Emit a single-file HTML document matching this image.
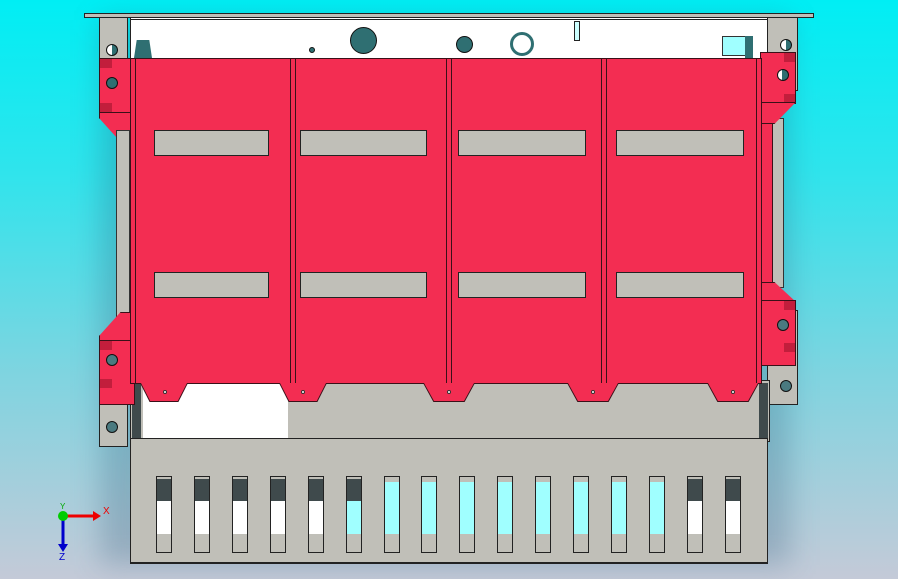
<!DOCTYPE html>
<html><head><style>
body{margin:0;width:898px;height:579px;overflow:hidden;position:relative;background:linear-gradient(180deg,#00eef4 0%,#30e4ec 30%,#80d4e0 65%,#c4cad8 100%);font-family:"Liberation Sans",sans-serif}
div{position:absolute;box-sizing:border-box}
.g{background:#c0bfb8;border:1px solid #222}
.r{background:#f32d52;border:1px solid #3a1018}
.dr{background:#c21e3c}
.w{background:#fff}
.c{border-radius:50%;background:#2f6f72;border:1px solid #111}
.slot{width:16px;top:476px;height:77px;border:1px solid #222;background:#c0bfb8}
.slot i{position:absolute;left:0;right:0;display:block}
</style></head><body>
<div style="left:100px;top:20px;width:690px;height:545px;background:rgba(40,80,110,.25);filter:blur(14px)"></div>
<!-- top flange -->
<div class="g" style="left:84px;top:13px;width:730px;height:5px"></div>
<div class="w" style="left:130px;top:17px;width:638px;height:42px;border:1px solid #222"></div>
<div style="left:130px;top:19px;width:638px;height:1px;background:#222"></div>
<div class="c" style="left:350px;top:27px;width:27px;height:27px"></div>
<div class="c" style="left:456px;top:36px;width:17px;height:17px"></div>
<div class="c" style="left:510px;top:32px;width:24px;height:24px;background:#fff;border:3px solid #2f6f72"></div>
<div class="c" style="left:309px;top:47px;width:6px;height:6px"></div>
<div style="left:574px;top:21px;width:6px;height:20px;border:1px solid #222;background:#cff"></div>
<div style="left:134px;top:40px;width:18px;height:18px;background:#2f6f72;clip-path:polygon(15% 0,85% 0,100% 100%,0 100%)"></div>
<div style="left:722px;top:36px;width:30px;height:20px;background:#a0ffff;border:1px solid #333"></div>
<div style="left:745px;top:36px;width:8px;height:22px;background:#2f6f72"></div>
<!-- uprights -->
<div class="g" style="left:99px;top:17px;width:29px;height:44px"></div>
<div class="c" style="left:106px;top:44px;width:12px;height:12px;background:linear-gradient(90deg,#fff 50%,#2f6f72 50%)"></div>
<div class="g" style="left:767px;top:17px;width:31px;height:74px"></div>
<div class="c" style="left:780px;top:39px;width:12px;height:12px;background:linear-gradient(90deg,#fff 50%,#2f6f72 50%)"></div>
<div class="g" style="left:99px;top:395px;width:29px;height:52px"></div>
<div class="c" style="left:106px;top:421px;width:12px;height:12px;background:#4a7a80"></div>
<div class="g" style="left:767px;top:310px;width:31px;height:95px"></div>
<div class="c" style="left:780px;top:380px;width:12px;height:12px;background:#4a7a80"></div>
<!-- grey band -->
<div class="g" style="left:130px;top:380px;width:640px;height:62px"></div>
<div class="w" style="left:143px;top:383px;width:145px;height:56px"></div>
<div style="left:132px;top:383px;width:9px;height:56px;background:#3f4a4c"></div>
<div style="left:759px;top:383px;width:9px;height:56px;background:#3f4a4c"></div>
<!-- left bracket -->
<div class="r" style="left:99px;top:58px;width:36px;height:55px"></div>
<div class="dr" style="left:100px;top:59px;width:12px;height:9px"></div>
<div class="dr" style="left:100px;top:103px;width:12px;height:9px"></div>
<div class="c" style="left:106px;top:77px;width:12px;height:12px"></div>
<div class="r" style="left:99px;top:112px;width:36px;height:30px;clip-path:polygon(0 0,100% 0,100% 100%,60% 100%,0 20%)"></div>
<div style="left:116px;top:130px;width:14px;height:200px;background:#c0bfb8;border:1px solid #333"></div>
<div class="r" style="left:99px;top:312px;width:36px;height:30px;clip-path:polygon(60% 0,100% 0,100% 100%,0 100%,0 80%)"></div>
<div class="r" style="left:99px;top:340px;width:36px;height:65px"></div>
<div class="dr" style="left:100px;top:341px;width:12px;height:9px"></div>
<div class="dr" style="left:100px;top:379px;width:12px;height:9px"></div>
<div class="c" style="left:106px;top:354px;width:12px;height:12px;background:#4a7a80"></div>
<!-- right bracket -->
<div style="left:770px;top:118px;width:14px;height:170px;background:#c0bfb8;border:1px solid #333"></div>
<div class="r" style="left:760px;top:110px;width:13px;height:225px"></div>
<div class="r" style="left:760px;top:52px;width:36px;height:52px"></div>
<div class="dr" style="left:784px;top:53px;width:11px;height:9px"></div>
<div class="dr" style="left:784px;top:94px;width:11px;height:9px"></div>
<div class="c" style="left:777px;top:69px;width:12px;height:12px;background:linear-gradient(90deg,#fff 40%,#2f6f72 40%)"></div>
<div class="r" style="left:760px;top:102px;width:36px;height:22px;clip-path:polygon(0 0,100% 0,40% 100%,0 100%)"></div>
<div class="r" style="left:760px;top:282px;width:36px;height:20px;clip-path:polygon(0 0,40% 0,100% 100%,0 100%)"></div>
<div class="r" style="left:760px;top:300px;width:36px;height:66px"></div>
<div class="dr" style="left:784px;top:301px;width:11px;height:9px"></div>
<div class="dr" style="left:784px;top:343px;width:11px;height:9px"></div>
<div class="c" style="left:777px;top:319px;width:12px;height:12px;background:#4a7a80"></div>
<!-- main red -->
<div class="r" style="left:130px;top:58px;width:632px;height:326px"></div>
<div style="left:135px;top:58px;width:1px;height:326px;background:#3a1018"></div>
<div style="left:290px;top:58px;width:6px;height:326px;border-left:1px solid #3a1018;border-right:1px solid #3a1018"></div>
<div style="left:446px;top:58px;width:6px;height:326px;border-left:1px solid #3a1018;border-right:1px solid #3a1018"></div>
<div style="left:601px;top:58px;width:6px;height:326px;border-left:1px solid #3a1018;border-right:1px solid #3a1018"></div>
<div style="left:756px;top:58px;width:1px;height:326px;background:#3a1018"></div>
<div class="g" style="left:154px;top:130px;width:115px;height:26px"></div>
<div class="g" style="left:300px;top:130px;width:127px;height:26px"></div>
<div class="g" style="left:458px;top:130px;width:128px;height:26px"></div>
<div class="g" style="left:616px;top:130px;width:128px;height:26px"></div>
<div class="g" style="left:154px;top:272px;width:115px;height:26px"></div>
<div class="g" style="left:300px;top:272px;width:127px;height:26px"></div>
<div class="g" style="left:458px;top:272px;width:128px;height:26px"></div>
<div class="g" style="left:616px;top:272px;width:128px;height:26px"></div>
<!-- tabs -->
<div style="left:140px;top:383px;width:48px;height:19px;background:#3a1018;clip-path:polygon(0 0,100% 0,80% 100%,20% 100%)"></div>
<div style="left:141px;top:383px;width:46px;height:18px;background:#f32d52;clip-path:polygon(0 0,100% 0,80% 100%,20% 100%)"></div>
<div style="left:279px;top:383px;width:48px;height:19px;background:#3a1018;clip-path:polygon(0 0,100% 0,80% 100%,20% 100%)"></div>
<div style="left:280px;top:383px;width:46px;height:18px;background:#f32d52;clip-path:polygon(0 0,100% 0,80% 100%,20% 100%)"></div>
<div style="left:423px;top:383px;width:52px;height:19px;background:#3a1018;clip-path:polygon(0 0,100% 0,80% 100%,20% 100%)"></div>
<div style="left:424px;top:383px;width:50px;height:18px;background:#f32d52;clip-path:polygon(0 0,100% 0,80% 100%,20% 100%)"></div>
<div style="left:567px;top:383px;width:52px;height:19px;background:#3a1018;clip-path:polygon(0 0,100% 0,80% 100%,20% 100%)"></div>
<div style="left:568px;top:383px;width:50px;height:18px;background:#f32d52;clip-path:polygon(0 0,100% 0,80% 100%,20% 100%)"></div>
<div style="left:707px;top:383px;width:52px;height:19px;background:#3a1018;clip-path:polygon(0 0,100% 0,80% 100%,20% 100%)"></div>
<div style="left:708px;top:383px;width:50px;height:18px;background:#f32d52;clip-path:polygon(0 0,100% 0,80% 100%,20% 100%)"></div>
<div class="w" style="left:163px;top:390px;width:4px;height:4px;border-radius:50%;border:1px solid #333"></div>
<div class="w" style="left:301px;top:390px;width:4px;height:4px;border-radius:50%;border:1px solid #333"></div>
<div class="w" style="left:447px;top:390px;width:4px;height:4px;border-radius:50%;border:1px solid #333"></div>
<div class="w" style="left:591px;top:390px;width:4px;height:4px;border-radius:50%;border:1px solid #333"></div>
<div class="w" style="left:731px;top:390px;width:4px;height:4px;border-radius:50%;border:1px solid #333"></div>
<!-- grill box -->
<div class="g" style="left:130px;top:438px;width:638px;height:126px;border-width:1px 1px 2px 1px"></div>
<div class="slot" style="left:156px"><i style="top:2px;height:22px;background:#3f4a4c"></i><i style="top:24px;height:33px;background:#fff"></i></div>
<div class="slot" style="left:194px"><i style="top:2px;height:22px;background:#3f4a4c"></i><i style="top:24px;height:33px;background:#fff"></i></div>
<div class="slot" style="left:232px"><i style="top:2px;height:22px;background:#3f4a4c"></i><i style="top:24px;height:33px;background:#fff"></i></div>
<div class="slot" style="left:270px"><i style="top:2px;height:22px;background:#3f4a4c"></i><i style="top:24px;height:33px;background:#fff"></i></div>
<div class="slot" style="left:308px"><i style="top:2px;height:22px;background:#3f4a4c"></i><i style="top:24px;height:33px;background:#fff"></i></div>
<div class="slot" style="left:346px"><i style="top:2px;height:22px;background:#3f4a4c"></i><i style="top:24px;height:33px;background:#a0ffff"></i></div>
<div class="slot" style="left:384px"><i style="top:5px;height:52px;background:#a0ffff"></i></div>
<div class="slot" style="left:421px"><i style="top:5px;height:52px;background:#a0ffff"></i></div>
<div class="slot" style="left:459px"><i style="top:5px;height:52px;background:#a0ffff"></i></div>
<div class="slot" style="left:497px"><i style="top:5px;height:52px;background:#a0ffff"></i></div>
<div class="slot" style="left:535px"><i style="top:5px;height:52px;background:#a0ffff"></i></div>
<div class="slot" style="left:573px"><i style="top:5px;height:52px;background:#a0ffff"></i></div>
<div class="slot" style="left:611px"><i style="top:5px;height:52px;background:#a0ffff"></i></div>
<div class="slot" style="left:649px"><i style="top:5px;height:52px;background:#a0ffff"></i></div>
<div class="slot" style="left:687px"><i style="top:2px;height:22px;background:#3f4a4c"></i><i style="top:24px;height:33px;background:#fff"></i></div>
<div class="slot" style="left:725px"><i style="top:2px;height:22px;background:#3f4a4c"></i><i style="top:24px;height:33px;background:#fff"></i></div>
<!-- triad -->
<svg style="position:absolute;left:45px;top:500px" width="70" height="65">
<line x1="18" y1="16" x2="48" y2="16" stroke="#e00" stroke-width="3"/><polygon points="48,11 56,16 48,21" fill="#e00"/>
<line x1="18" y1="16" x2="18" y2="46" stroke="#00c" stroke-width="3"/><polygon points="13,44 18,52 23,44" fill="#00c"/>
<circle cx="18" cy="16" r="5" fill="#0c0"/>
<text x="58" y="14" font-size="10" fill="#e00" font-family="Liberation Sans">X</text>
<text x="15" y="9" font-size="8" fill="#0a0" font-family="Liberation Sans">Y</text>
<text x="14" y="60" font-size="10" fill="#00c" font-family="Liberation Sans">Z</text>
</svg>
</body></html>
